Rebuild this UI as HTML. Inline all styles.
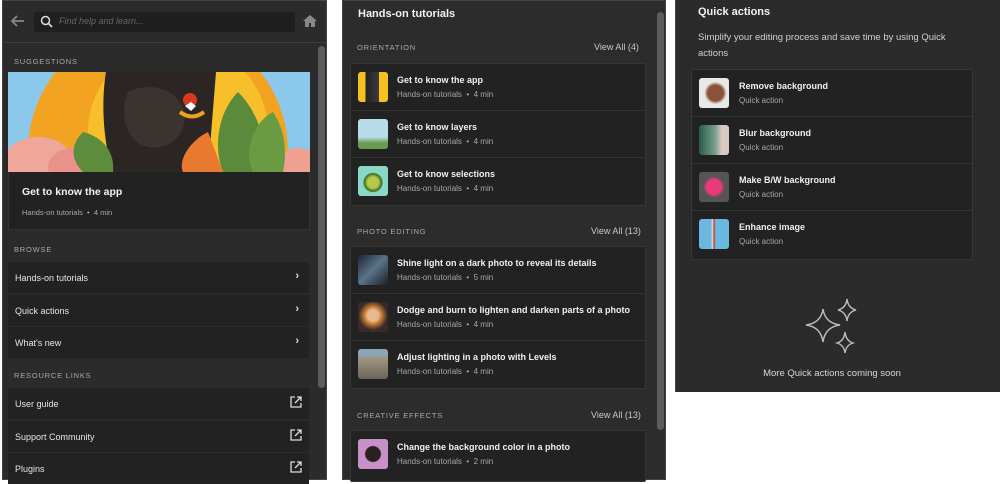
<!DOCTYPE html>
<html><head><meta charset="utf-8"><style>
*{margin:0;padding:0;box-sizing:border-box}
body{width:1000px;height:480px;background:#fff;position:relative;overflow:hidden;font-family:"Liberation Sans",sans-serif;color:#e8e8e8}
.a{position:absolute}
.p{position:absolute;background:#2c2c2c}
.lab{position:absolute;font-size:7.5px;letter-spacing:.8px;color:#a8a8a8}
.row{position:absolute;left:8px;width:301px;height:31px;background:#222;font-size:9px;padding:11px 7px;color:#e6e6e6}
.chev{position:absolute;right:10px;top:8px;font-size:11px;color:#ddd;font-weight:bold}
.ext{position:absolute;right:7px;top:8px;width:12px;height:12px}
.grp{position:absolute;background:#222;border:1px solid #363636;border-radius:2px}
.it{position:absolute;left:0;right:0;height:47px;border-bottom:1px solid #323232}
.th{position:absolute;left:7px;top:8px;width:30px;height:30px;border-radius:3px}
.t1{position:absolute;left:46px;top:11px;font-size:9px;font-weight:bold;color:#f0f0f0;white-space:nowrap}
.t2{position:absolute;left:46px;top:26px;font-size:8px;color:#a8a8a8;white-space:nowrap}
.va{position:absolute;font-size:9px;color:#c8c8c8}
.sb{position:absolute;width:7px;background:#5c5c5c;border-radius:4px}
</style></head><body>
<!-- LEFT -->
<div class="p" style="left:2px;top:0;width:325px;height:480px;border:1px solid #444;background:#2b2b2b">
</div>
<div class="a" style="left:3px;top:42px;width:323px;height:1px;background:#3c3c3c"></div>
<svg class="a" style="left:10px;top:14px" width="16" height="14"><path d="M14 7H3M7 2L2 7l5 5" stroke="#888" stroke-width="1.8" fill="none"/></svg>
<div class="a" style="left:34px;top:12px;width:261px;height:20px;background:#1f1f1f;border-radius:2px"></div>
<svg class="a" style="left:40px;top:15px" width="13" height="13"><circle cx="5.5" cy="5.5" r="4" stroke="#ddd" stroke-width="1.5" fill="none"/><path d="M8.5 8.5L12 12" stroke="#ddd" stroke-width="1.6"/></svg>
<div class="a" style="left:59px;top:16px;font-size:9px;font-style:italic;color:#666">Find help and learn...</div>
<svg class="a" style="left:303px;top:15px" width="14" height="12"><path d="M7 0L0 6h2v6h4V8h2v4h4V6h2z" fill="#888"/></svg>
<div class="sb" style="left:318px;top:46px;height:342px"></div>
<div class="lab" style="left:14px;top:57px">SUGGESTIONS</div>
<div class="a" style="left:8px;top:72px;width:302px;height:158px;background:#222;border:1px solid #333"></div>
<svg class="a" style="left:8px;top:72px" width="302" height="100">
<rect width="302" height="100" fill="#8cc8ec"/>
<circle cx="150" cy="80" r="130" fill="#f2a322"/>
<circle cx="170" cy="60" r="90" fill="#f7c02b"/>
<ellipse cx="30" cy="90" rx="35" ry="25" fill="#f0a69a"/>
<ellipse cx="70" cy="95" rx="30" ry="20" fill="#e8928a"/>
<ellipse cx="290" cy="92" rx="20" ry="16" fill="#f0a090"/>
<path d="M98 0h110l-8 100H105c-10-30-12-70-7-100z" fill="#2b2523"/>
<path d="M120 20c20-10 45-5 55 15 8 20-10 45-35 40-20-4-30-30-20-55z" fill="#3a3330"/>
<circle cx="182" cy="28" r="7" fill="#d93a1f"/>
<path d="M177 34l6-4 5 4-5 5z" fill="#fff"/>
<path d="M172 40c8 6 16 6 24 0" stroke="#f0a020" stroke-width="4" fill="none"/>
<path d="M230 20c-20 20-25 55-15 80h40c5-30-5-60-25-80z" fill="#5a8a3a"/>
<path d="M75 60c-15 15-10 30 0 40h30c2-20-10-35-30-40z" fill="#5c8c3c"/>
<path d="M265 40c-20 10-30 40-20 60h30c5-25 0-45-10-60z" fill="#6a9a42"/>
<path d="M200 60c-20 10-30 30-25 40h40z" fill="#e87a30"/>
</svg>
<div class="a" style="left:22px;top:186px;font-size:10.5px;font-weight:bold;color:#f2f2f2">Get to know the app</div>
<div class="a" style="left:22px;top:208px;font-size:7.5px;color:#aaa">Hands-on tutorials &nbsp;•&nbsp; 4 min</div>
<div class="lab" style="left:14px;top:245px">BROWSE</div>
<div class="row" style="top:262px">Hands-on tutorials<span class="chev">›</span></div>
<div class="row" style="top:295px">Quick actions<span class="chev">›</span></div>
<div class="row" style="top:327px">What's new<span class="chev">›</span></div>
<div class="lab" style="left:14px;top:371px">RESOURCE LINKS</div>
<div class="row" style="top:388px">User guide<svg class="ext" viewBox="0 0 12 12"><path d="M5 1H1v10h10V7" stroke="#ddd" stroke-width="1.3" fill="none"/><path d="M5 7l6-6M7 1h4v4" stroke="#ddd" stroke-width="1.3" fill="none"/></svg></div>
<div class="row" style="top:421px">Support Community<svg class="ext" viewBox="0 0 12 12"><path d="M5 1H1v10h10V7" stroke="#ddd" stroke-width="1.3" fill="none"/><path d="M5 7l6-6M7 1h4v4" stroke="#ddd" stroke-width="1.3" fill="none"/></svg></div>
<div class="row" style="top:453px">Plugins<svg class="ext" viewBox="0 0 12 12"><path d="M5 1H1v10h10V7" stroke="#ddd" stroke-width="1.3" fill="none"/><path d="M5 7l6-6M7 1h4v4" stroke="#ddd" stroke-width="1.3" fill="none"/></svg></div>

<!-- MIDDLE -->
<div class="p" style="left:342px;top:0;width:324px;height:480px;border:1px solid #444"></div>
<div class="sb" style="left:657px;top:12px;height:418px"></div>
<div class="a" style="left:358px;top:8px;font-size:11px;font-weight:bold;color:#f2f2f2">Hands-on tutorials</div>
<div class="lab" style="left:357px;top:43px">ORIENTATION</div>
<div class="va" style="left:594px;top:42px">View All (4)</div>
<div class="grp" style="left:350px;top:63px;width:296px;height:143px">
<div class="it" style="top:0"><div class="th" style="background:linear-gradient(90deg,#f5c020 25%,#222 25%,#3a3a3a 70%,#f5c020 70%)"></div><div class="t1">Get to know the app</div><div class="t2">Hands-on tutorials &nbsp;•&nbsp; 4 min</div></div>
<div class="it" style="top:47px"><div class="th" style="background:linear-gradient(180deg,#b8dcea 60%,#6a9a52 80%)"></div><div class="t1">Get to know layers</div><div class="t2">Hands-on tutorials &nbsp;•&nbsp; 4 min</div></div>
<div class="it" style="top:94px;border:0"><div class="th" style="background:radial-gradient(circle at 50% 55%,#b8c848 25%,#3a6a22 40%,#8ad8c8 45%)"></div><div class="t1">Get to know selections</div><div class="t2">Hands-on tutorials &nbsp;•&nbsp; 4 min</div></div>
</div>
<div class="lab" style="left:357px;top:227px">PHOTO EDITING</div>
<div class="va" style="left:591px;top:226px">View All (13)</div>
<div class="grp" style="left:350px;top:246px;width:296px;height:143px">
<div class="it" style="top:0"><div class="th" style="background:linear-gradient(135deg,#1c2632,#5a7488 50%,#1a1e24)"></div><div class="t1">Shine light on a dark photo to reveal its details</div><div class="t2">Hands-on tutorials &nbsp;•&nbsp; 5 min</div></div>
<div class="it" style="top:47px"><div class="th" style="background:radial-gradient(circle at 50% 45%,#e8b890 25%,#c07830 40%,#3a2a28 65%)"></div><div class="t1">Dodge and burn to lighten and darken parts of a photo</div><div class="t2">Hands-on tutorials &nbsp;•&nbsp; 4 min</div></div>
<div class="it" style="top:94px;border:0"><div class="th" style="background:linear-gradient(180deg,#8aa4b8 20%,#a09680 30%,#6a6458)"></div><div class="t1">Adjust lighting in a photo with Levels</div><div class="t2">Hands-on tutorials &nbsp;•&nbsp; 4 min</div></div>
</div>
<div class="lab" style="left:357px;top:411px">CREATIVE EFFECTS</div>
<div class="va" style="left:591px;top:410px">View All (13)</div>
<div class="grp" style="left:350px;top:430px;width:296px;height:52px">
<div class="it" style="top:0;border:0"><div class="th" style="background:radial-gradient(circle at 50% 50%,#2a2020 35%,#c890c8 40%)"></div><div class="t1">Change the background color in a photo</div><div class="t2">Hands-on tutorials &nbsp;•&nbsp; 2 min</div></div>
</div>

<!-- RIGHT -->
<div class="p" style="left:675px;top:0;width:325px;height:392px;background:#2b2b2b;border-left:1px solid #444"></div>
<div class="a" style="left:698px;top:6px;font-size:11px;font-weight:bold;color:#f2f2f2">Quick actions</div>
<div class="a" style="left:698px;top:30px;width:270px;font-size:9.5px;line-height:16px;color:#d0d0d0">Simplify your editing process and save time by using Quick actions</div>
<div class="grp" style="left:691px;top:69px;width:282px;height:191px">
<div class="it" style="top:0"><div class="th" style="background:radial-gradient(circle at 55% 50%,#8a5238 35%,#e8e8e8 50%)"></div><div class="t1" style="left:47px">Remove background</div><div class="t2" style="left:47px">Quick action</div></div>
<div class="it" style="top:47px"><div class="th" style="background:linear-gradient(90deg,#2a5a4a,#7aa090 55%,#d8c8c0 75%)"></div><div class="t1" style="left:47px">Blur background</div><div class="t2" style="left:47px">Quick action</div></div>
<div class="it" style="top:94px"><div class="th" style="background:radial-gradient(circle at 50% 50%,#e83a7a 35%,#555 50%)"></div><div class="t1" style="left:47px">Make B/W background</div><div class="t2" style="left:47px">Quick action</div></div>
<div class="it" style="top:141px;border:0"><div class="th" style="background:linear-gradient(90deg,#6ab8e0 40%,#e8e0d8 45%,#c83828 50%,#6ab8e0 55%);"></div><div class="t1" style="left:47px">Enhance image</div><div class="t2" style="left:47px">Quick action</div></div>
</div>
<svg class="a" style="left:795px;top:295px" width="70" height="65" fill="none" stroke="#bbb" stroke-width="1.4">
<path d="M28 14Q30 28 45 30Q30 32 28 47Q26 32 11 30Q26 28 28 14z"/>
<path d="M52 4Q53 13 61 15Q53 17 52 26Q51 17 43 15Q51 13 52 4z"/>
<path d="M50 37Q51 46 58 48Q51 50 50 58Q49 50 42 48Q49 46 50 37z"/>
</svg>
<div class="a" style="left:675px;width:314px;top:368px;text-align:center;font-size:9.5px;color:#d8d8d8">More Quick actions coming soon</div>
</body></html>
